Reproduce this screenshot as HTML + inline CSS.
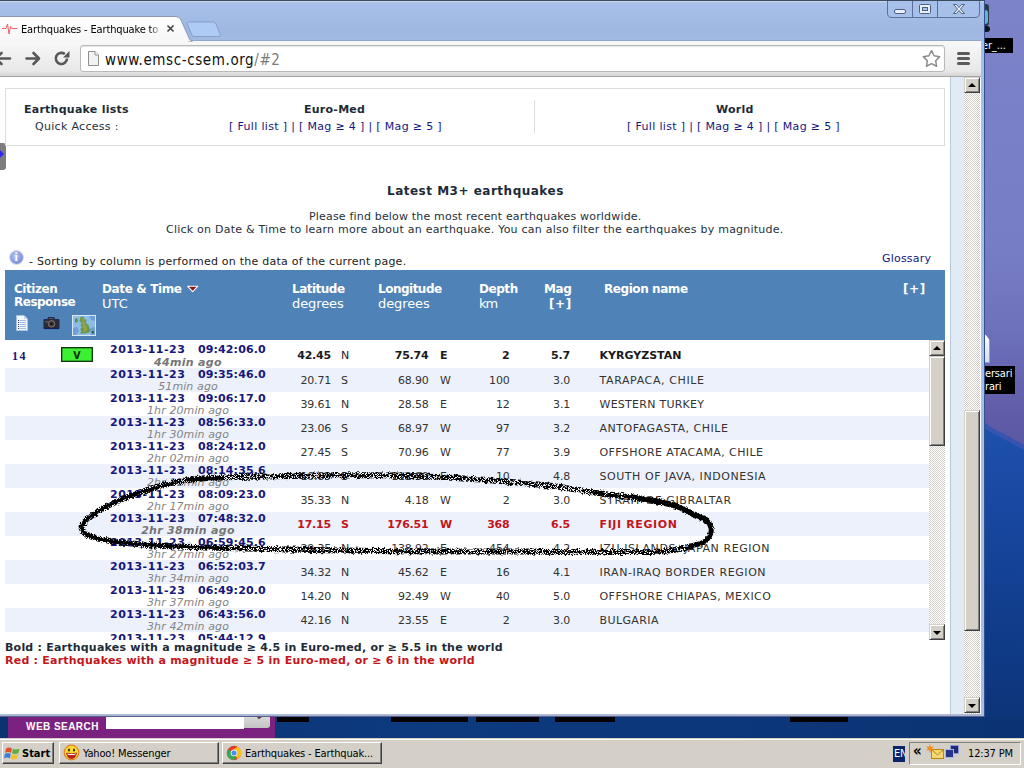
<!DOCTYPE html>
<html>
<head>
<meta charset="utf-8">
<title>Earthquakes - Earthquake today</title>
<style>
*{box-sizing:border-box;margin:0;padding:0}
html,body{width:1024px;height:768px;overflow:hidden;background:#0e3d86}
body{position:relative;font-family:"DejaVu Sans","Liberation Sans",sans-serif;font-size:11px;color:#333}
.a{position:absolute}
.t{position:absolute;white-space:nowrap;font-size:11px;line-height:13px;letter-spacing:.25px}
.b{font-weight:bold}
.i{font-style:italic}
.navy{color:#16167c}
.slate{color:#1d2b38}
.red{color:#c2161c}
.gray{color:#848484}
.w{color:#fff}
.ui{font-family:"DejaVu Sans Condensed","Liberation Sans",sans-serif;letter-spacing:-.15px;color:#000}
/* desktop */
#desk{left:0;top:0;width:1024px;height:768px;background:linear-gradient(#7c83c9 0px,#777dc5 250px,#6d71bb 330px,#625fab 400px,#5c58a2 445px)}
.dlabel{background:#000;color:#fff;overflow:hidden}
/* window */
#win{left:0;top:0;width:985px;height:717px;background:#a6bfe8;border-right:1px solid #33508f;border-bottom:1px solid #33508f}
#titlebar{left:0;top:0;width:984px;height:41px;background:linear-gradient(#3c4c5e 0,#3c4c5e 1px,#c5d5ea 1px,#c5d5ea 2px,#adc0e4 2px,#a7c0ea 6px,#9eb7e1 30px,#a3bbe3 41px)}
#toolbar{left:0;top:40px;width:981px;height:37px;background:linear-gradient(#f8f8f8,#e8e8e8 30px,#d4d4d4 35px);border-bottom:1px solid #a6a6a6;border-top:1px solid #8fa5cb}
#content{left:0;top:77px;width:981px;height:637px;background:#fff;overflow:hidden}
.track{background-color:#fff;background-image:linear-gradient(45deg,#d4d0c8 25%,transparent 25%,transparent 75%,#d4d0c8 75%),linear-gradient(45deg,#d4d0c8 25%,transparent 25%,transparent 75%,#d4d0c8 75%);background-size:2px 2px;background-position:0 0,1px 1px}
.sbtn{background:#d4d0c8;border:1px solid;border-color:#d4d0c8 #404040 #404040 #d4d0c8;box-shadow:inset 1px 1px 0 #fff,inset -1px -1px 0 #808080}
.arr{position:absolute;left:4px;width:0;height:0;border-left:4px solid transparent;border-right:4px solid transparent}
.up{top:5px;border-bottom:4px solid #000}
.dn{top:6px;border-top:4px solid #000}
/* page */
.stripe{position:absolute;left:5px;width:924px;height:24px;background:#ecf1fc}
/* taskbar */
#taskbar{left:0;top:738px;width:1024px;height:30px;background:#d4d0c8;border-top:1px solid #d4d0c8;box-shadow:inset 0 1px 0 #fff}
.tbtn{position:absolute;top:742px;height:22px;border:1px solid;border-color:#fff #404040 #404040 #fff;box-shadow:inset -1px -1px 0 #808080;background:#d4d0c8}
</style>
</head>
<body>
<div id="desk" class="a"></div>
<svg class="a" style="left:984px;top:384px" width="40" height="356" viewBox="0 0 40 356">
  <defs><linearGradient id="mg" x1="0" y1="0" x2="0" y2="1"><stop offset="0" stop-color="#1e51ae"/><stop offset=".3" stop-color="#17479f"/><stop offset=".6" stop-color="#113d8c"/><stop offset="1" stop-color="#0b3274"/></linearGradient></defs>
  <path d="M0 38 L8 44 L20 50 L40 61 L40 360 L0 360Z" fill="url(#mg)"/>
  <path d="M0 38 L8 44 L20 50 L40 61 L40 66 L20 55 L8 49 L0 44Z" fill="#4a58b4" opacity=".6"/>
</svg>
<!-- desktop icon fragments -->
<div class="a" style="left:985px;top:4px;width:4px;height:22px;background:#2a3a4a;border-radius:0 3px 3px 0"></div>
<div class="a" style="left:985px;top:10px;width:3px;height:14px;background:#5fb6d8;border-radius:0 3px 3px 0"></div>
<div class="a" style="left:985px;top:26px;width:5px;height:6px;background:#10141c;border-radius:0 3px 3px 0"></div>
<div class="a dlabel" style="left:985px;top:38px;width:28px;height:15px"><span class="t ui w" style="left:-3px;top:1px;color:#fff">er_...</span></div>
<div class="a" style="left:985px;top:334px;width:5px;height:29px;background:linear-gradient(#fff,#cfe0f7);border:1px solid #8aa0d8;border-left:0;clip-path:polygon(0 0,100% 22%,100% 100%,0 100%)"></div>
<div class="a dlabel" style="left:985px;top:366px;width:30px;height:28px"><span class="t ui" style="left:0;top:1px;color:#fff">ersari</span><span class="t ui" style="left:0;top:14px;color:#fff">rari</span></div>

<div id="win" class="a">
  <div id="titlebar" class="a"></div>
  <!-- window caption buttons -->
  <svg class="a" style="left:886px;top:1px" width="96" height="19" viewBox="0 1 96 19">
    <path d="M1.5 0 V13 Q1.5 17.5 6 17.5 H89 Q93.5 17.5 93.5 13 V0" fill="#a7c0ea" stroke="#5a6f99" stroke-width="1"/>
    <path d="M26.5 0V17.5M51.5 0V17.5" stroke="#5a6f99" stroke-width="1"/>
    <rect x="8.5" y="9.5" width="11" height="4" rx="1.5" fill="#e8f0fc" stroke="#50607e" stroke-width="1"/>
    <rect x="33.5" y="4.5" width="11" height="9" rx="1" fill="#e8f0fc" stroke="#50607e" stroke-width="1"/>
    <rect x="36.5" y="7.5" width="5" height="3" fill="#a9c2ec" stroke="#50607e" stroke-width="1"/>
    <path d="M67.5 4.5 h3 l2.500 3 l2.500 -3 h3 l-4 4.500 l4 4.500 h-3 l-2.500 -3 l-2.500 3 h-3 l4 -4.500z" fill="#e8f0fc" stroke="#50607e" stroke-width="1"/>
  </svg>
  <!-- new tab button -->
  <svg class="a" style="left:184px;top:20px" width="40" height="18" viewBox="0 0 40 18">
    <path d="M4.500 2 H29 Q31 2 32 4 L36.200 14.500 Q36.800 16.500 35 16.500 H10.500 Q8.500 16.500 7.600 14.500 L3.400 4 Q2.800 2 4.500 2Z" fill="#adcbf4" stroke="#859fca" stroke-width="1"/>
  </svg>
  <div id="toolbar" class="a"></div>
  <!-- active tab -->
  <svg class="a" style="left:0;top:14px" width="200" height="28" viewBox="0 0 200 28">
    <defs><linearGradient id="tg" x1="0" y1="0" x2="0" y2="1"><stop offset="0" stop-color="#ffffff"/><stop offset="1" stop-color="#f6f6f6"/></linearGradient></defs>
    <path d="M-5 28 V2.500 H176 Q179.500 2.500 181 6 L189.500 25 Q190 26.500 192 27 V28 H-5Z" fill="url(#tg)" stroke="#8a99b0" stroke-width="1"/>
    <rect x="-5" y="27" width="193" height="2" fill="#f6f6f6"/>
    <path d="M2 14.500 H6 L7.500 10 L9 20 L10.500 12.500 L11.500 14.500 H17.500" fill="none" stroke="#ee5f6a" stroke-width="1" stroke-linejoin="round"/>
    <path d="M167.500 11.500 l6 6 m0 -6 l-6 6" stroke="#444" stroke-width="1.600"/>
  </svg>
  <span class="t ui" style="left:21px;top:23px;width:138px;overflow:hidden;color:#000;-webkit-mask-image:linear-gradient(90deg,#000 129px,transparent 140px);mask-image:linear-gradient(90deg,#000 129px,transparent 140px)">Earthquakes - Earthquake today</span>
  <!-- nav icons -->
  <svg class="a" style="left:0;top:46px" width="80" height="26" viewBox="0 0 80 26">
    <g fill="none" stroke="#585858" stroke-width="2.600" stroke-linecap="round" stroke-linejoin="round">
      <path d="M-4 12.500 H10 M1.500 7 L-4 12.500 L1.500 18"/>
      <path d="M26.500 12.500 H38.500 M33.500 7 L39 12.500 L33.500 18"/>
    </g>
    <path d="M67 12.500 A5.600 5.600 0 1 1 64.800 8" fill="none" stroke="#585858" stroke-width="2.600"/>
    <path d="M69.500 5 V11.500 H63Z" fill="#585858"/>
  </svg>
  <!-- omnibox -->
  <div class="a" style="left:80px;top:45px;width:865px;height:27px;background:#fff;border:1px solid #b9b9b9;border-radius:3px;box-shadow:inset 0 1px 1px #e4e4e4"></div>
  <svg class="a" style="left:87px;top:50px" width="14" height="17" viewBox="0 0 14 17">
    <path d="M1.500 1.500 H8 L11.500 5 V15.500 H1.500Z" fill="#f3f3f3" stroke="#8e8e8e" stroke-width="1"/>
    <path d="M8 1.500 V5 H11.500" fill="#fff" stroke="#8e8e8e" stroke-width="1"/>
  </svg>
  <span class="t" style="left:105px;top:50px;font-family:'DejaVu Sans Condensed','Liberation Sans',sans-serif;font-size:15px;line-height:20px;letter-spacing:.6px;color:#111">www.emsc-csem.org<span style="color:#7a7a7a">/#2</span></span>
  <svg class="a" style="left:921px;top:48px" width="21" height="21" viewBox="0 0 21 21">
    <path d="M10.50 2.70 L13.09 7.74 L18.68 8.64 L14.68 12.66 L15.55 18.26 L10.50 15.70 L5.45 18.26 L6.32 12.66 L2.32 8.64 L7.91 7.74Z" fill="#fff" stroke="#8c8c8c" stroke-width="1.500" stroke-linejoin="round"/>
  </svg>
  <div class="a" style="left:957px;top:52px;width:13px;height:3px;background:#5a5a5a;border-radius:1.500px;box-shadow:0 5px 0 #5c5c5c,0 10px 0 #5c5c5c"></div>
<div id="content" class="a"></div>
<div class="a" style="left:950px;top:77px;width:14px;height:637px;background:#e0ebf6;border-left:1px solid #b9c9da"></div>
<div class="a track" style="left:964px;top:77px;width:16px;height:637px"></div>
<div class="a sbtn" style="left:964px;top:77px;width:16px;height:16px"><i class="arr up" style="left:3px"></i></div>
<div class="a sbtn" style="left:964px;top:410px;width:16px;height:221px"></div>
<div class="a sbtn" style="left:964px;top:697px;width:16px;height:16px"><i class="arr dn" style="left:3px"></i></div>
<div class="a" style="left:0;top:143px;width:6px;height:27px;background:#7d7d7d;border-radius:0 3px 3px 0"></div>
<div class="a" style="left:0;top:150px;width:0;height:0;border-left:4px solid #2b2bf0;border-top:4.5px solid transparent;border-bottom:4.5px solid transparent"></div>
<div class="a" style="left:5px;top:88px;width:940px;height:58px;border:1px solid #dcdcdc"></div>
<div class="a" style="left:534px;top:100px;width:1px;height:33px;background:#dcdcdc"></div>
<span class="t b slate" style="left:24px;top:103px;">Earthquake lists</span>
<span class="t " style="left:35px;top:120px;color:#25303b;letter-spacing:.3px;">Quick Access :</span>
<span class="t b slate" style="left:304px;top:103px;">Euro-Med</span>
<span class="t navy" style="left:229px;top:120px;letter-spacing:.33px;">[ Full list ] | [ Mag ≥ 4 ] | [ Mag ≥ 5 ]</span>
<span class="t b slate" style="left:716px;top:103px;">World</span>
<span class="t navy" style="left:627px;top:120px;letter-spacing:.33px;">[ Full list ] | [ Mag ≥ 4 ] | [ Mag ≥ 5 ]</span>
<span class="t b slate" style="font-size:12px;line-height:14px;left:387px;top:184px;letter-spacing:.5px;">Latest M3+ earthquakes</span>
<span class="t " style="left:309px;top:210px;letter-spacing:.18px;color:#25303b;">Please find below the most recent earthquakes worldwide.</span>
<span class="t " style="left:166px;top:223px;letter-spacing:.23px;color:#25303b;">Click on Date &amp; Time to learn more about an earthquake. You can also filter the earthquakes by magnitude.</span>
<div class="a" style="left:10px;top:251px;width:13px;height:13px;border-radius:50%;background:radial-gradient(circle at 40% 35%,#b3c2f0,#7f93dc 65%,#6a7dcc);box-shadow:0 0 0 1px #d3dbf5"></div>
<span class="a b" style="left:14.5px;top:251px;font-family:'Liberation Serif',serif;font-size:12px;line-height:13px;color:#fff">i</span>
<span class="t " style="left:29px;top:255px;letter-spacing:.24px;color:#1a1a1a;">- Sorting by column is performed on the data of the current page.</span>
<span class="t navy" style="left:882px;top:252px;letter-spacing:.2px;">Glossary</span>
<div class="a" style="left:5px;top:270px;width:940px;height:70px;background:#4f82b7"></div>
<span class="t b w" style="font-size:12px;line-height:14px;left:14px;top:282px;letter-spacing:-0.45px;">Citizen</span>
<span class="t b w" style="font-size:12px;line-height:14px;left:14px;top:295px;letter-spacing:-0.5px;">Response</span>
<span class="t b w" style="font-size:12px;line-height:14px;left:102px;top:282px;letter-spacing:-0.37px;">Date &amp; Time</span>
<span class="t w" style="font-size:13px;line-height:15px;left:102px;top:296px;letter-spacing:0px;">UTC</span>
<span class="t b w" style="font-size:12px;line-height:14px;left:292px;top:282px;letter-spacing:-0.5px;">Latitude</span>
<span class="t w" style="font-size:13px;line-height:15px;left:292px;top:296px;letter-spacing:-.1px;">degrees</span>
<span class="t b w" style="font-size:12px;line-height:14px;left:378px;top:282px;letter-spacing:-0.5px;">Longitude</span>
<span class="t w" style="font-size:13px;line-height:15px;left:378px;top:296px;letter-spacing:-.1px;">degrees</span>
<span class="t b w" style="font-size:12px;line-height:14px;left:479px;top:282px;letter-spacing:-0.45px;">Depth</span>
<span class="t w" style="font-size:13px;line-height:15px;left:479px;top:296px;letter-spacing:-1px;">km</span>
<span class="t b w" style="font-size:12px;line-height:14px;left:544px;top:282px;letter-spacing:-0.4px;">Mag</span>
<span class="t b w" style="font-size:12px;line-height:14px;left:549px;top:297px;letter-spacing:0.6px;">[+]</span>
<span class="t b w" style="font-size:12px;line-height:14px;left:604px;top:282px;letter-spacing:-0.43px;">Region name</span>
<span class="t b w" style="font-size:12px;line-height:14px;left:903px;top:282px;letter-spacing:0.6px;">[+]</span>
<svg class="a" style="left:186px;top:284px" width="14" height="11" viewBox="0 0 14 11"><path d="M1.700 2.300 H11.700 L6.700 7.700Z" fill="#8e1418" stroke="#fff" stroke-width="1.100" stroke-linejoin="round"/></svg>
<svg class="a" style="left:15px;top:314px" width="14" height="18" viewBox="0 0 14 18"><path d="M1.500 1.500 H9 L12.500 5 V16.500 H1.500Z" fill="#f2f7ff" stroke="#a9c3e6" stroke-width="1"/><path d="M9 1.500 V5 H12.500Z" fill="#c5d8f2"/><path d="M5 6.500H11M5 8.500H11M5 10.500H11M5 12.500H11M5 14.500H11" stroke="#a3bfe6" stroke-width="1"/><path d="M3 6.500H4.200M3 8.500H4.200M3 10.500H4.200M3 12.500H4.200M3 14.500H4.200" stroke="#39465c" stroke-width="1"/></svg>
<svg class="a" style="left:43px;top:316px" width="17" height="14" viewBox="0 0 17 14"><path d="M1 3.500 H4.500 L5.500 1.500 H11 L12 3.500 H16 V12.500 H1Z" fill="#2a2a30" stroke="#1b2a55" stroke-width="1"/><path d="M1 12.500H16" stroke="#0f1f55" stroke-width="1.200"/><circle cx="8.500" cy="7.800" r="3.300" fill="#4a4038" stroke="#777078" stroke-width="1"/><circle cx="8.500" cy="7.800" r="1.400" fill="#141418"/><rect x="2.500" y="5" width="2" height="1.500" fill="#6b6b72"/><path d="M6 2.500H10.500" stroke="#55555c" stroke-width="1"/></svg>
<svg class="a" style="left:72px;top:315px" width="24" height="21" viewBox="0 0 24 21"><rect x=".5" y=".5" width="23" height="20" fill="#8cbde9" stroke="#d7e8f8" stroke-width="1"/><path d="M1 13 L5 12 L7 16 L4 20 L1 20Z M17 1 L23 1 L23 6 L19 5Z M18 13 L23 12 L23 20 L19 20Z" fill="#6f9fd8"/><path d="M8.500 2 L11.500 1.500 L12.500 4 L14.500 5 L14 8 L16.500 10 L17.500 13.500 L19 15 L17 17.500 L13 18.500 L8 18.500 L9.500 16 L8 14.500 L10 12.500 L8.500 10.500 L9.500 8 L7.500 6 L8 3.500Z" fill="#6c9a4c"/><path d="M10 3 L11.500 3.500 L12.500 6.500 L13 10 L15 13 L14.500 16 L12 17 L11.500 13 L10.500 9.500 L10.500 6Z" fill="#99a04a"/><path d="M3 4 L5 3 L6 5.500 L4.500 8 L3 7Z" fill="#5f8f55"/><path d="M20 16 l2 .5 l-.5 2 l-2 -.5z" fill="#2f4f3f"/></svg>
<div class="a" style="left:0;top:340px;width:929px;height:300px;overflow:hidden">
<span class="t b navy" style="left:110px;top:3px;letter-spacing:.5px;">2013-11-23</span>
<span class="t b navy" style="left:198px;top:3px;letter-spacing:.12px;">09:42:06.0</span>
<span class="t i gray b" style="left:88px;width:200px;text-align:center;top:16px;letter-spacing:.3px;color:#757575;">44min ago</span>
<span class="t b" style="right:598px;top:9px;color:#1a1a1a;letter-spacing:-.2px;">42.45</span>
<span class="t " style="left:341px;top:9px;color:#222;">N</span>
<span class="t b" style="right:500.5px;top:9px;color:#1a1a1a;letter-spacing:-.2px;">75.74</span>
<span class="t b" style="left:440px;top:9px;color:#1a1a1a;">E</span>
<span class="t b" style="right:419.5px;top:9px;color:#1a1a1a;letter-spacing:-.2px;">2</span>
<span class="t b" style="right:359px;top:9px;color:#1a1a1a;letter-spacing:-.2px;">5.7</span>
<span class="t b" style="left:599.5px;top:9px;color:#1a1a1a;letter-spacing:0.0px;">KYRGYZSTAN</span>
<div class="stripe" style="top:28px"></div>
<span class="t b navy" style="left:110px;top:28px;letter-spacing:.5px;">2013-11-23</span>
<span class="t b navy" style="left:198px;top:28px;letter-spacing:.12px;">09:35:46.0</span>
<span class="t i gray" style="left:88px;width:200px;text-align:center;top:40px;letter-spacing:.1px;">51min ago</span>
<span class="t " style="right:598px;top:34px;color:#333;letter-spacing:-.2px;">20.71</span>
<span class="t " style="left:341px;top:34px;color:#333;">S</span>
<span class="t " style="right:500.5px;top:34px;color:#333;letter-spacing:-.2px;">68.90</span>
<span class="t " style="left:440px;top:34px;color:#333;">W</span>
<span class="t " style="right:419.5px;top:34px;color:#333;letter-spacing:-.2px;">100</span>
<span class="t " style="right:359px;top:34px;color:#333;letter-spacing:-.2px;">3.0</span>
<span class="t " style="left:599.5px;top:34px;color:#333;letter-spacing:0.62px;">TARAPACA, CHILE</span>
<span class="t b navy" style="left:110px;top:52px;letter-spacing:.5px;">2013-11-23</span>
<span class="t b navy" style="left:198px;top:52px;letter-spacing:.12px;">09:06:17.0</span>
<span class="t i gray" style="left:88px;width:200px;text-align:center;top:64px;letter-spacing:.1px;">1hr 20min ago</span>
<span class="t " style="right:598px;top:58px;color:#333;letter-spacing:-.2px;">39.61</span>
<span class="t " style="left:341px;top:58px;color:#333;">N</span>
<span class="t " style="right:500.5px;top:58px;color:#333;letter-spacing:-.2px;">28.58</span>
<span class="t " style="left:440px;top:58px;color:#333;">E</span>
<span class="t " style="right:419.5px;top:58px;color:#333;letter-spacing:-.2px;">12</span>
<span class="t " style="right:359px;top:58px;color:#333;letter-spacing:-.2px;">3.1</span>
<span class="t " style="left:599.5px;top:58px;color:#333;letter-spacing:0.26px;">WESTERN TURKEY</span>
<div class="stripe" style="top:76px"></div>
<span class="t b navy" style="left:110px;top:76px;letter-spacing:.5px;">2013-11-23</span>
<span class="t b navy" style="left:198px;top:76px;letter-spacing:.12px;">08:56:33.0</span>
<span class="t i gray" style="left:88px;width:200px;text-align:center;top:88px;letter-spacing:.1px;">1hr 30min ago</span>
<span class="t " style="right:598px;top:82px;color:#333;letter-spacing:-.2px;">23.06</span>
<span class="t " style="left:341px;top:82px;color:#333;">S</span>
<span class="t " style="right:500.5px;top:82px;color:#333;letter-spacing:-.2px;">68.97</span>
<span class="t " style="left:440px;top:82px;color:#333;">W</span>
<span class="t " style="right:419.5px;top:82px;color:#333;letter-spacing:-.2px;">97</span>
<span class="t " style="right:359px;top:82px;color:#333;letter-spacing:-.2px;">3.2</span>
<span class="t " style="left:599.5px;top:82px;color:#333;letter-spacing:0.53px;">ANTOFAGASTA, CHILE</span>
<span class="t b navy" style="left:110px;top:100px;letter-spacing:.5px;">2013-11-23</span>
<span class="t b navy" style="left:198px;top:100px;letter-spacing:.12px;">08:24:12.0</span>
<span class="t i gray" style="left:88px;width:200px;text-align:center;top:112px;letter-spacing:.1px;">2hr 02min ago</span>
<span class="t " style="right:598px;top:106px;color:#333;letter-spacing:-.2px;">27.45</span>
<span class="t " style="left:341px;top:106px;color:#333;">S</span>
<span class="t " style="right:500.5px;top:106px;color:#333;letter-spacing:-.2px;">70.96</span>
<span class="t " style="left:440px;top:106px;color:#333;">W</span>
<span class="t " style="right:419.5px;top:106px;color:#333;letter-spacing:-.2px;">77</span>
<span class="t " style="right:359px;top:106px;color:#333;letter-spacing:-.2px;">3.9</span>
<span class="t " style="left:599.5px;top:106px;color:#333;letter-spacing:0.41px;">OFFSHORE ATACAMA, CHILE</span>
<div class="stripe" style="top:124px"></div>
<span class="t b navy" style="left:110px;top:124px;letter-spacing:.5px;">2013-11-23</span>
<span class="t b navy" style="left:198px;top:124px;letter-spacing:.12px;">08:14:35.6</span>
<span class="t i gray" style="left:88px;width:200px;text-align:center;top:136px;letter-spacing:.1px;">2hr 11min ago</span>
<span class="t " style="right:598px;top:130px;color:#333;letter-spacing:-.2px;">10.89</span>
<span class="t " style="left:341px;top:130px;color:#333;">S</span>
<span class="t " style="right:500.5px;top:130px;color:#333;letter-spacing:-.2px;">112.99</span>
<span class="t " style="left:440px;top:130px;color:#333;">E</span>
<span class="t " style="right:419.5px;top:130px;color:#333;letter-spacing:-.2px;">10</span>
<span class="t " style="right:359px;top:130px;color:#333;letter-spacing:-.2px;">4.8</span>
<span class="t " style="left:599.5px;top:130px;color:#333;letter-spacing:0.55px;">SOUTH OF JAVA, INDONESIA</span>
<span class="t b navy" style="left:110px;top:148px;letter-spacing:.5px;">2013-11-23</span>
<span class="t b navy" style="left:198px;top:148px;letter-spacing:.12px;">08:09:23.0</span>
<span class="t i gray" style="left:88px;width:200px;text-align:center;top:160px;letter-spacing:.1px;">2hr 17min ago</span>
<span class="t " style="right:598px;top:154px;color:#333;letter-spacing:-.2px;">35.33</span>
<span class="t " style="left:341px;top:154px;color:#333;">N</span>
<span class="t " style="right:500.5px;top:154px;color:#333;letter-spacing:-.2px;">4.18</span>
<span class="t " style="left:440px;top:154px;color:#333;">W</span>
<span class="t " style="right:419.5px;top:154px;color:#333;letter-spacing:-.2px;">2</span>
<span class="t " style="right:359px;top:154px;color:#333;letter-spacing:-.2px;">3.0</span>
<span class="t " style="left:599.5px;top:154px;color:#333;letter-spacing:0.64px;">STRAIT OF GIBRALTAR</span>
<div class="stripe" style="top:172px"></div>
<span class="t b navy" style="left:110px;top:172px;letter-spacing:.5px;">2013-11-23</span>
<span class="t b navy" style="left:198px;top:172px;letter-spacing:.12px;">07:48:32.0</span>
<span class="t i gray b" style="left:88px;width:200px;text-align:center;top:184px;letter-spacing:.3px;color:#757575;">2hr 38min ago</span>
<span class="t b red" style="right:598px;top:178px;letter-spacing:-.2px;">17.15</span>
<span class="t b red" style="left:341px;top:178px;">S</span>
<span class="t b red" style="right:500.5px;top:178px;letter-spacing:-.2px;">176.51</span>
<span class="t b red" style="left:440px;top:178px;">W</span>
<span class="t b red" style="right:419.5px;top:178px;letter-spacing:-.2px;">368</span>
<span class="t b red" style="right:359px;top:178px;letter-spacing:-.2px;">6.5</span>
<span class="t b red" style="left:599.5px;top:178px;letter-spacing:0.62px;">FIJI REGION</span>
<span class="t b navy" style="left:110px;top:196px;letter-spacing:.5px;">2013-11-23</span>
<span class="t b navy" style="left:198px;top:196px;letter-spacing:.12px;">06:59:45.6</span>
<span class="t i gray" style="left:88px;width:200px;text-align:center;top:208px;letter-spacing:.1px;">3hr 27min ago</span>
<span class="t " style="right:598px;top:202px;color:#333;letter-spacing:-.2px;">29.35</span>
<span class="t " style="left:341px;top:202px;color:#333;">N</span>
<span class="t " style="right:500.5px;top:202px;color:#333;letter-spacing:-.2px;">138.92</span>
<span class="t " style="left:440px;top:202px;color:#333;">E</span>
<span class="t " style="right:419.5px;top:202px;color:#333;letter-spacing:-.2px;">454</span>
<span class="t " style="right:359px;top:202px;color:#333;letter-spacing:-.2px;">4.2</span>
<span class="t " style="left:599.5px;top:202px;color:#333;letter-spacing:0.58px;">IZU ISLANDS, JAPAN REGION</span>
<div class="stripe" style="top:220px"></div>
<span class="t b navy" style="left:110px;top:220px;letter-spacing:.5px;">2013-11-23</span>
<span class="t b navy" style="left:198px;top:220px;letter-spacing:.12px;">06:52:03.7</span>
<span class="t i gray" style="left:88px;width:200px;text-align:center;top:232px;letter-spacing:.1px;">3hr 34min ago</span>
<span class="t " style="right:598px;top:226px;color:#333;letter-spacing:-.2px;">34.32</span>
<span class="t " style="left:341px;top:226px;color:#333;">N</span>
<span class="t " style="right:500.5px;top:226px;color:#333;letter-spacing:-.2px;">45.62</span>
<span class="t " style="left:440px;top:226px;color:#333;">E</span>
<span class="t " style="right:419.5px;top:226px;color:#333;letter-spacing:-.2px;">16</span>
<span class="t " style="right:359px;top:226px;color:#333;letter-spacing:-.2px;">4.1</span>
<span class="t " style="left:599.5px;top:226px;color:#333;letter-spacing:0.57px;">IRAN-IRAQ BORDER REGION</span>
<span class="t b navy" style="left:110px;top:244px;letter-spacing:.5px;">2013-11-23</span>
<span class="t b navy" style="left:198px;top:244px;letter-spacing:.12px;">06:49:20.0</span>
<span class="t i gray" style="left:88px;width:200px;text-align:center;top:256px;letter-spacing:.1px;">3hr 37min ago</span>
<span class="t " style="right:598px;top:250px;color:#333;letter-spacing:-.2px;">14.20</span>
<span class="t " style="left:341px;top:250px;color:#333;">N</span>
<span class="t " style="right:500.5px;top:250px;color:#333;letter-spacing:-.2px;">92.49</span>
<span class="t " style="left:440px;top:250px;color:#333;">W</span>
<span class="t " style="right:419.5px;top:250px;color:#333;letter-spacing:-.2px;">40</span>
<span class="t " style="right:359px;top:250px;color:#333;letter-spacing:-.2px;">5.0</span>
<span class="t " style="left:599.5px;top:250px;color:#333;letter-spacing:0.46px;">OFFSHORE CHIAPAS, MEXICO</span>
<div class="stripe" style="top:268px"></div>
<span class="t b navy" style="left:110px;top:268px;letter-spacing:.5px;">2013-11-23</span>
<span class="t b navy" style="left:198px;top:268px;letter-spacing:.12px;">06:43:56.0</span>
<span class="t i gray" style="left:88px;width:200px;text-align:center;top:280px;letter-spacing:.1px;">3hr 42min ago</span>
<span class="t " style="right:598px;top:274px;color:#333;letter-spacing:-.2px;">42.16</span>
<span class="t " style="left:341px;top:274px;color:#333;">N</span>
<span class="t " style="right:500.5px;top:274px;color:#333;letter-spacing:-.2px;">23.55</span>
<span class="t " style="left:440px;top:274px;color:#333;">E</span>
<span class="t " style="right:419.5px;top:274px;color:#333;letter-spacing:-.2px;">2</span>
<span class="t " style="right:359px;top:274px;color:#333;letter-spacing:-.2px;">3.0</span>
<span class="t " style="left:599.5px;top:274px;color:#333;letter-spacing:0.4px;">BULGARIA</span>
<span class="t b navy" style="left:110px;top:292px;letter-spacing:.5px;">2013-11-23</span>
<span class="t b navy" style="left:198px;top:292px;letter-spacing:.12px;">05:44:12.9</span>
<span class="t i gray" style="left:88px;width:200px;text-align:center;top:304px;letter-spacing:.1px;">4hr 42min ago</span>
<span class="t b navy" style="left:12px;top:9px;font-family:'Liberation Serif',serif;font-size:12px;line-height:14px;letter-spacing:1.5px">14</span>
<div class="a" style="left:61px;top:7px;width:32px;height:15px;background:#3cf032;border:1px solid #0f3a0f;box-shadow:inset 0 0 0 .5px #1f6a1f"></div>
<span class="t b" style="left:61px;width:32px;text-align:center;top:9px;color:#072507;font-family:'DejaVu Sans Condensed',sans-serif;letter-spacing:0;font-size:10.5px">V</span>
</div>
<div class="a track" style="left:929px;top:340px;width:16px;height:300px"></div>
<div class="a sbtn" style="left:929px;top:340px;width:16px;height:16px"><i class="arr up" style="left:3px"></i></div>
<div class="a sbtn" style="left:929px;top:356px;width:16px;height:90px"></div>
<div class="a sbtn" style="left:929px;top:624px;width:16px;height:16px"><i class="arr dn" style="left:3px"></i></div>
<span class="t b slate" style="left:5px;top:641px;letter-spacing:.22px;">Bold : Earthquakes with a magnitude ≥ 4.5 in Euro-med, or ≥ 5.5 in the world</span>
<span class="t b red" style="left:5px;top:654px;letter-spacing:.23px;">Red : Earthquakes with a magnitude ≥ 5 in Euro-med, or ≥ 6 in the world</span>
</div><!-- /win -->
<!-- hand drawn circle -->
<svg class="a" style="left:60px;top:455px" width="680" height="115" viewBox="60 455 680 115">
  <defs>
    <filter id="spray" x="-5%" y="-20%" width="110%" height="140%">
      <feTurbulence type="fractalNoise" baseFrequency="1.25" numOctaves="1" seed="7" result="n"/>
      <feColorMatrix in="n" type="matrix" values="0 0 0 0 0  0 0 0 0 0  0 0 0 0 0  16 0 0 0 -6.8" result="m"/>
      <feTurbulence type="fractalNoise" baseFrequency="0.25" numOctaves="2" seed="2" result="n2"/>
      <feDisplacementMap in="SourceGraphic" in2="n2" scale="4" xChannelSelector="R" yChannelSelector="G" result="d"/>
      <feComposite in="d" in2="m" operator="in"/>
    </filter>
    <filter id="rough2" x="-5%" y="-20%" width="110%" height="140%">
      <feTurbulence type="fractalNoise" baseFrequency="0.9" numOctaves="2" seed="9" result="n"/>
      <feDisplacementMap in="SourceGraphic" in2="n" scale="3.500" xChannelSelector="R" yChannelSelector="G"/>
    </filter>
  </defs>
  <g fill="none" stroke="#000" stroke-linecap="round" stroke-linejoin="round">
    <path filter="url(#spray)" stroke-width="6" d="M706.0 520.0 C703.8 519.0 698.0 516.3 693.0 514.0 C688.0 511.7 682.7 508.2 676.0 506.0 C669.3 503.8 661.3 502.3 653.0 500.7 C644.7 499.1 636.0 498.0 626.0 496.6 C616.0 495.2 604.0 494.0 593.0 492.4 C582.0 490.8 571.7 488.6 560.0 487.0 C548.3 485.4 540.3 484.5 523.0 483.0 C505.7 481.5 478.2 479.2 456.0 478.0 C433.8 476.8 411.8 475.9 390.0 475.5 C368.2 475.1 345.7 475.3 325.0 475.5 C304.3 475.7 285.3 476.1 266.0 476.5 C246.7 476.9 225.0 476.9 209.0 478.0 C193.0 479.1 181.0 480.8 170.0 483.0 C159.0 485.2 151.3 488.7 143.0 491.5 C134.7 494.3 127.2 496.9 120.0 500.0 C112.8 503.1 105.6 506.7 100.0 510.0 C94.4 513.3 89.7 517.3 86.6 520.0 C83.5 522.7 82.2 524.6 81.6 526.4 C81.0 528.2 82.2 529.6 83.0 531.0 C83.8 532.4 83.3 533.2 86.6 534.7 C89.9 536.2 96.4 538.3 103.0 539.7 C109.6 541.1 117.0 542.0 126.4 543.0 C135.8 544.0 143.0 544.9 159.6 545.7 C176.2 546.5 198.3 547.2 226.0 548.0 C253.7 548.8 296.8 549.8 325.6 550.3 C354.4 550.8 376.2 551.1 398.6 551.3 C421.0 551.5 439.3 551.5 460.0 551.5 C480.7 551.5 506.3 551.4 523.0 551.5 C539.7 551.6 543.5 551.9 560.0 552.0 C576.5 552.1 605.3 552.1 622.0 552.0 C638.7 551.9 648.7 552.3 660.0 551.5 C671.3 550.7 685.0 547.8 690.0 547.0"/>
    <path filter="url(#rough2)" stroke-width="5" d="M640.0 498.5 C642.2 498.9 647.0 499.4 653.0 500.7 C659.0 501.9 669.3 503.8 676.0 506.0 C682.7 508.2 688.0 511.7 693.0 514.0 C698.0 516.3 703.0 517.7 706.0 520.0 C709.0 522.3 710.4 525.3 711.0 528.0 C711.6 530.7 710.8 534.0 709.5 536.4 C708.2 538.8 706.2 540.9 703.0 542.5 C699.8 544.1 692.2 545.4 690.0 546.0"/>
    <path filter="url(#rough2)" stroke-width="4.400" d="M222.0 477.5 C219.8 477.6 214.3 477.6 209.0 478.0 C203.7 478.4 193.2 479.7 190.0 480.0"/>
    <path filter="url(#rough2)" stroke-width="2.600" d="M176.0 482.5 C170.5 484.0 152.3 488.6 143.0 491.5 C133.7 494.4 127.2 496.9 120.0 500.0 C112.8 503.1 105.6 506.7 100.0 510.0 C94.4 513.3 89.7 517.3 86.6 520.0 C83.5 522.7 82.2 524.6 81.6 526.4 C81.0 528.2 82.2 529.6 83.0 531.0 C83.8 532.4 83.3 533.2 86.6 534.7 C89.9 536.2 96.4 538.3 103.0 539.7 C109.6 541.1 117.0 542.0 126.4 543.0 C135.8 544.0 143.0 544.9 159.6 545.7 C176.2 546.5 214.9 547.6 226.0 548.0"/>
    <path filter="url(#rough2)" stroke-width="2" d="M593.0 492.4 C598.5 493.1 617.3 495.4 626.0 496.6 C634.7 497.8 641.8 499.0 645.0 499.5"/>
  </g>
</svg>
<!-- bottom strip -->
<div class="a" style="left:0;top:714px;width:984px;height:3px;background:linear-gradient(#b4c1da 0,#a2b0cc 2px,#5d5f8e 2px)"></div>
<div class="a" style="left:0;top:717px;width:1024px;height:21px;background:linear-gradient(90deg,#0b3372,#0d397e 40%,#0c377a 70%,#0b3373)"></div>
<div class="a" style="left:8px;top:717px;width:267px;height:21px;background:#7b2280"></div>
<span class="t b w" style="left:26px;top:720.5px;font-family:'Liberation Sans',sans-serif;font-size:10px;line-height:12px;letter-spacing:.45px">WEB SEARCH</span>
<div class="a" style="left:106px;top:717px;width:138px;height:12px;background:#fff"></div>
<div class="a" style="left:244px;top:717px;width:26px;height:11px;background:linear-gradient(#d8d8d8,#c4c4c4);border-radius:0 0 3px 0;overflow:hidden"><div class="a" style="left:13px;top:-3px;width:9px;height:3px;background:#444;transform:rotate(-35deg)"></div></div>
<div class="a" style="left:277px;top:717px;width:32px;height:5px;background:#000"></div>
<div class="a" style="left:391px;top:717px;width:77px;height:5px;background:#000"></div>
<div class="a" style="left:476px;top:717px;width:63px;height:5px;background:#000"></div>
<div class="a" style="left:555px;top:717px;width:60px;height:5px;background:#000"></div>
<div class="a" style="left:790px;top:717px;width:58px;height:5px;background:#000"></div>
<!-- taskbar -->
<div id="taskbar" class="a"></div>
<div class="tbtn" style="left:2px;width:52px"></div>
<svg class="a" style="left:4px;top:745px" width="18" height="16" viewBox="0 0 18 16">
  <path d="M2 3.500 Q5 1.500 8 3.500 L7 8 Q4 6 1 8Z" fill="#e2502a"/>
  <path d="M9 3.800 Q12 5.500 15.500 3.500 L14.500 8 Q11.500 10 8 8.200Z" fill="#5fb044"/>
  <path d="M.8 9 Q4 7 6.800 9 L5.800 13.500 Q3 11.500 0 13.500Z" fill="#3d7fd6"/>
  <path d="M7.800 9.300 Q11 11 14.300 9 L13.300 13.500 Q10 15.500 6.800 13.800Z" fill="#f2c12e"/>
</svg>
<span class="t ui b" style="left:22px;top:747px;letter-spacing:0">Start</span>
<div class="tbtn" style="left:59px;width:160px"></div>
<svg class="a" style="left:63px;top:744px" width="17" height="17" viewBox="0 0 17 17">
  <circle cx="8.500" cy="8.500" r="7.300" fill="#fdd835" stroke="#e0861c" stroke-width="1.200"/>
  <ellipse cx="6" cy="6" rx="1" ry="1.600" fill="#3a2a10"/><ellipse cx="11" cy="6" rx="1" ry="1.600" fill="#3a2a10"/>
  <path d="M3.500 9 Q8.500 10.500 13.500 9 Q12.500 14.500 8.500 14.500 Q4.500 14.500 3.500 9Z" fill="#c21f1f" stroke="#7a1010" stroke-width=".6"/>
  <path d="M4.200 9.400 Q8.500 10.700 12.800 9.400 L12.500 10.500 Q8.500 11.700 4.500 10.500Z" fill="#fff"/>
</svg>
<span class="t ui" style="left:83px;top:747px">Yahoo! Messenger</span>
<div class="tbtn" style="left:222px;width:160px"></div>
<svg class="a" style="left:226px;top:745px" width="16" height="16" viewBox="0 0 16 16">
  <circle cx="8" cy="8" r="7.200" fill="#e33b2e"/>
  <path d="M8 8 L1.760 4.400 A7.200 7.200 0 0 0 8 15.200 L11.400 9.300Z" fill="#3aa757" transform="rotate(0 8 8)"/>
  <path d="M8 8 L8 15.200 A7.200 7.200 0 0 0 14.240 4.400 L8 4.400Z" fill="#fbc116" transform="rotate(-30 8 8)"/>
  <circle cx="8" cy="8" r="3.300" fill="#f4f4f4"/><circle cx="8" cy="8" r="2.500" fill="#4a8af4"/>
</svg>
<span class="t ui" style="left:245px;top:747px">Earthquakes - Earthquak...</span>
<!-- tray -->
<div class="a" style="left:893px;top:746px;width:12px;height:16px;background:#0a246a;overflow:hidden"><span class="t ui" style="left:1px;top:1px;color:#fff;letter-spacing:-.3px">EN</span></div>
<div class="a" style="left:909px;top:742px;width:112px;height:23px;border:1px solid;border-color:#808080 #fff #fff #808080"></div>
<span class="t ui b" style="left:913px;top:745px;font-size:15px">«</span>
<svg class="a" style="left:925px;top:743px" width="38" height="19" viewBox="0 0 38 19">
  <rect x="6.500" y="6.500" width="12" height="9" fill="#f7d774" stroke="#b8860b" stroke-width="1"/>
  <path d="M6.500 6.500 L12.500 12 L18.500 6.500" fill="none" stroke="#b8860b" stroke-width="1"/>
  <path d="M5 1 L6 4 L9 3 L7 5.500 L9 7.500 L6 7 L5 10 L4 7 L1 7.500 L3 5.500 L1 3 L4 4Z" fill="#f08a1c"/>
  <rect x="25.500" y="2.500" width="8" height="8" fill="#1f2a78" stroke="#8f9bd0" stroke-width="1"/>
  <rect x="20.500" y="6.500" width="8" height="8" fill="#27358c" stroke="#aab4e0" stroke-width="1"/>
  <path d="M22 16.500 H29 M28 12.500 H35" stroke="#c8cce0" stroke-width="1.500"/>
</svg>
<span class="t ui" style="left:968px;top:747px">12:37 PM</span>
</body>
</html>
